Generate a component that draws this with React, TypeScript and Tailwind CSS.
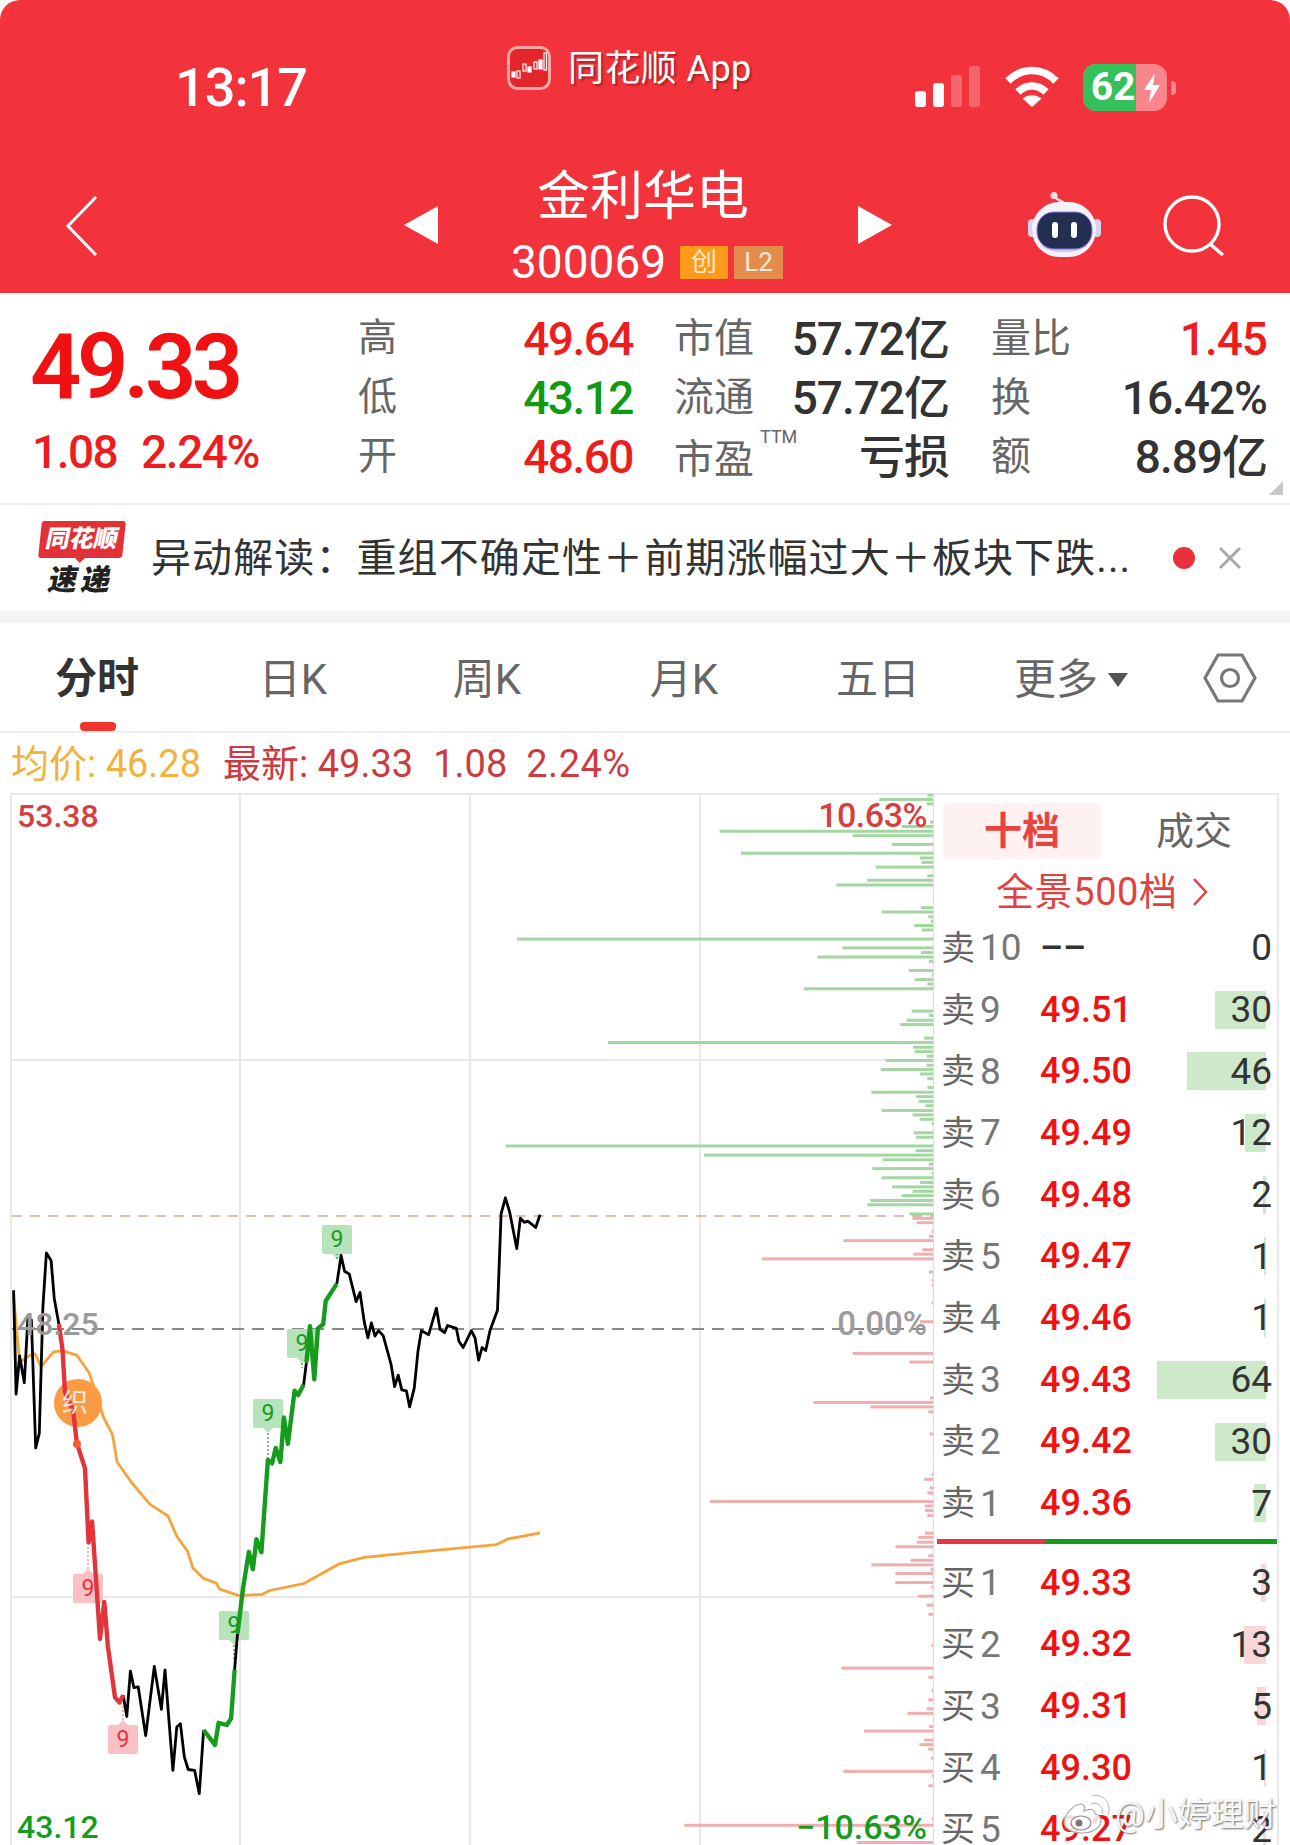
import { Fragment } from "react";

type Pt = [number, number];

// trace points were read off a crop, this maps them back to page pixels
const z4 = (pts: Pt[]) => pts.map(([x, y]) => `${(x / 2.8).toFixed(1)},${(1180 + y / 2.358).toFixed(1)}`).join(" ");

const black1: Pt[] = [[38,260],[45,505],[55,415],[68,478],[78,325],[88,330],[100,632],[110,597],[120,300],[130,172],[143,190],[152,280],[165,340]];
const red1: Pt[] = [[165,340],[175,400],[182,500],[205,545],[215,620],[238,680],[248,855],[258,805],[280,1082],[292,995],[302,1100],[322,1220],[335,1232],[345,1215]];
const black2: Pt[] = [[345,1215],[355,1265],[365,1158],[375,1197],[387,1195],[408,1310],[432,1147],[452,1248],[462,1155],[484,1392],[495,1290],[505,1282],[516,1360],[527,1390],[545,1392],[558,1447],[570,1297]];
const green1: Pt[] = [[570,1297],[602,1332],[612,1280],[635,1285],[647,1270],[657,1155]];
const black3: Pt[] = [[657,1155],[665,1070]];
const green2: Pt[] = [[665,1070],[680,965],[697,877],[708,918],[718,847],[732,878],[750,660],[762,668],[772,632],[785,665],[795,560],[806,622],[825,497],[835,507],[850,483]];
const black4: Pt[] = [[850,483],[858,430]];
const green3: Pt[] = [[858,430],[868,345],[880,470],[890,350],[905,340],[912,285],[943,245]];
const black5: Pt[] = [[943,245],[955,178],[965,215],[978,222],[997,287],[1008,265],[1020,335],[1030,372],[1040,337],[1050,368],[1060,355],[1073,367],[1095,435],[1105,487],[1115,460],[1125,495],[1138,497],[1147,535],[1160,490],[1170,405],[1180,355],[1200,365],[1222,302],[1232,352],[1245,360],[1253,343],[1278,350],[1285,380],[1297,395],[1320,355],[1330,372],[1340,425],[1350,395],[1360,402],[1372,355],[1393,307],[1403,80],[1415,42],[1427,75],[1447,162],[1457,90],[1468,100],[1478,97],[1500,112],[1512,82]];
const avg: Pt[] = [[38,275],[55,430],[80,415],[98,410],[115,440],[150,405],[175,403],[215,413],[250,455],[290,560],[315,600],[328,665],[370,715],[420,765],[470,792],[495,840],[525,875],[540,915],[570,940],[605,950],[615,965],[670,980],[735,977],[755,968],[850,952],[950,905],[1020,890],[1160,878],[1390,860],[1420,847],[1512,832]];

const greenBars: Pt[] = [[15,1342],[28,1198],[41,1340],[95,1350],[108,1265],[122,719],[135,1118],[161,1236],[187,783],[201,1320],[214,1325],[228,1187],[254,1342],[267,1162],[281,1069],[348,1323],[361,1205],[375,1345],[388,1352],[401,1303],[414,1325],[441,111],[467,1087],[481,1323],[494,1012],[507,1347],[534,1286],[547,1355],[561,1304],[574,1342],[588,972],[654,1295],[667,1347],[681,1280],[694,1261],[734,1332],[747,384],[761,1299],[774,1304],[787,1340],[800,1217],[814,1340],[827,1202],[840,1320],[854,1342],[880,1342],[894,1174],[907,1308],[921,1316],[934,1336],[948,1205],[961,1298],[974,1320],[987,1355],[1014,1302],[1027,1308],[1053,77],[1067,1307],[1080,672],[1094,1208],[1107,1347],[1120,1177],[1134,1355],[1147,1205],[1161,1320],[1174,1236],[1187,1298],[1200,1265],[1214,1171],[1227,1162],[1254,1288]];
const redBarsTop: Pt[] = [[1267,1297],[1280,1310],[1306,1355],[1320,1347],[1333,1090],[1360,1327],[1373,1300],[1387,845],[1426,1347]];
const redBarsLow: Pt[] = [[195,1355],[207,1355],[228,1358],[250,1355],[296,1320],[373,1118],[394,1288],[481,1350],[492,1000],[503,1171],[515,1345],[569,1349],[622,1358],[667,1355],[679,1332],[700,1349],[712,1342],[733,690],[744,1335],[755,1335],[767,1342],[810,1335],[820,1315],[832,1310],[843,1246],[865,1345],[876,1292],[887,1174],[898,1352],[908,1246],[930,1246],[941,1355],[963,1313],[985,1340],[1007,1345],[1083,1355],[1138,1084],[1160,1345],[1192,1355],[1215,1345],[1237,1340],[1248,1282],[1280,1348],[1291,1152],[1313,1333],[1324,1318],[1335,1345],[1357,1353],[1389,1090],[1400,1355],[1424,1345],[1505,1355],[1520,613],[1562,1130]];

const markers = [
  { x: 337, y: 1225, up: false, color: "green", stem: 0 },
  { x: 268, y: 1399, up: false, color: "green", stem: 32 },
  { x: 302, y: 1329, up: false, color: "green", stem: 10 },
  { x: 234, y: 1611, up: false, color: "green", stem: 20 },
  { x: 88, y: 1574, up: true, color: "red", stem: 28 },
  { x: 123, y: 1725, up: true, color: "red", stem: 20 },
];

const quoteRows = [
  ["高", "49.64", "text-[#ee1c1c]", "市值", "57.72亿", "量比", "1.45", "text-[#ee1c1c]"],
  ["低", "43.12", "text-[#0f9a12]", "流通", "57.72亿", "换", "16.42%", "text-[#333333]"],
  ["开", "48.60", "text-[#ee1c1c]", "市盈", "亏损", "额", "8.89亿", "text-[#333333]"],
];

const sellRows = [
  ["10", "––", "0", 0],
  ["9", "49.51", "30", 51],
  ["8", "49.50", "46", 79],
  ["7", "49.49", "12", 21],
  ["6", "49.48", "2", 3],
  ["5", "49.47", "1", 2],
  ["4", "49.46", "1", 2],
  ["3", "49.43", "64", 109],
  ["2", "49.42", "30", 51],
  ["1", "49.36", "7", 12],
] as const;

const buyRows = [
  ["1", "49.33", "3", 5],
  ["2", "49.32", "13", 22],
  ["3", "49.31", "5", 9],
  ["4", "49.30", "1", 2],
  ["5", "49.27", "2", 3],
] as const;

function AppLogo() {
  return (
    <svg width="44" height="44" viewBox="0 0 44 44">
      <rect x="1.5" y="1.5" width="41" height="41" rx="9" fill="#e3262c" stroke="#f9a6a8" strokeWidth="3" />
      <g fill="none" stroke="#ffffff" strokeWidth="1.2">
        <rect x="5" y="26" width="3" height="5" fill="#ffffff" />
        <rect x="10" y="25" width="3" height="7" />
        <rect x="16" y="18" width="3" height="7" />
        <rect x="21" y="21" width="3" height="5" fill="#ffffff" />
        <rect x="27" y="16" width="3" height="7" />
        <rect x="32" y="14" width="3" height="9" fill="#ffffff" />
        <rect x="37" y="7" width="2.5" height="17" />
      </g>
    </svg>
  );
}

function Signal() {
  return (
    <div className="flex items-end gap-[7px] h-[41px]">
      <div className="w-[11px] h-[16px] rounded-[3px] bg-white" />
      <div className="w-[11px] h-[24px] rounded-[3px] bg-white" />
      <div className="w-[11px] h-[32px] rounded-[3px] bg-white/25" />
      <div className="w-[11px] h-[41px] rounded-[3px] bg-white/25" />
    </div>
  );
}

function Wifi() {
  return (
    <svg width="56" height="42" viewBox="0 0 56 42" fill="none" stroke="#ffffff" strokeWidth="7.5">
      <path d="M4 16 C18 2 38 2 52 16" />
      <path d="M14 27 C22 19 34 19 42 27" />
      <path d="M18.5 33.5 L28 42 L37.5 33.5 C32 29 24 29 18.5 33.5 Z" fill="#ffffff" stroke="none" />
    </svg>
  );
}

function Battery() {
  return (
    <div className="flex items-center gap-[4px]">
      <div className="relative w-[84px] h-[47px] rounded-[13px] overflow-hidden bg-[#f8868c]">
        <div className="absolute left-0 top-0 bottom-0 w-[53px] bg-[#35c05a]" />
        <div className="relative flex items-center h-full pl-[8px] text-[39px] leading-none font-bold text-white">
          62
          <svg width="18" height="30" viewBox="0 0 18 30" className="ml-[8px]">
            <path d="M12 0 L1 17 H8 L6 30 L17 12 H10 Z" fill="#ffffff" />
          </svg>
        </div>
      </div>
      <div className="w-[5px] h-[14px] rounded-r-[4px] bg-[#f8868c]" />
    </div>
  );
}

function Robot() {
  return (
    <svg width="74" height="66" viewBox="0 0 74 66">
      <circle cx="27" cy="3.5" r="3.5" fill="#f6dfe4" />
      <path d="M28 5 C31 9 35 9 37 11" fill="none" stroke="#f6dfe4" strokeWidth="2.5" />
      <rect x="1" y="27" width="8" height="18" rx="4" fill="#d9d2f2" />
      <rect x="66" y="27" width="8" height="18" rx="4" fill="#d9d2f2" />
      <rect x="5" y="10" width="64" height="55" rx="27" fill="#f5f2fb" />
      <path d="M12 52 C22 63 52 63 62 52 C52 58 22 58 12 52 Z" fill="#cfc7f0" />
      <rect x="10" y="20" width="55" height="37" rx="17" fill="#222f52" stroke="#8f7be0" strokeWidth="1" />
      <rect x="25" y="30" width="6" height="16" rx="3" fill="#ffffff" />
      <rect x="44" y="30" width="6" height="16" rx="3" fill="#ffffff" />
    </svg>
  );
}

function WeiboMark() {
  return (
    <svg width="48" height="40" viewBox="0 0 48 40" fill="none">
      <path d="M19 39 C8 39 1 34 1 28 C1 21 11 10 18 10 C22 10 22 14 21 17 C27 14 32 15 32 20 C37 21 38 24 38 27 C38 33 30 39 19 39 Z" fill="#ffffff" fillOpacity="0.85" stroke="#a8a8a8" strokeWidth="1.2" />
      <ellipse cx="18" cy="29" rx="10" ry="7" fill="#ffffff" fillOpacity="0.7" stroke="#8a8a8a" strokeWidth="1.2" />
      <circle cx="16" cy="29" r="3.5" fill="#777777" />
      <path d="M28 10 C33 7 41 12 39 20" stroke="#ffffff" strokeWidth="3" />
      <path d="M28 10 C33 7 41 12 39 20" stroke="#b0b0b0" strokeWidth="1" />
      <path d="M29 2 C40 -1 49 9 45 21" stroke="#ffffff" strokeWidth="3" />
      <path d="M29 2 C40 -1 49 9 45 21" stroke="#b8b8b8" strokeWidth="1" />
    </svg>
  );
}

function Chart() {
  const bars = (list: Pt[], top: number, k: number, fill: string) =>
    list.map(([zy, zx], i) => (
      <rect key={i} x={480 + zx / 3} y={top + zy / k - 1.5} width={934 - (480 + zx / 3)} height="3" fill={fill} />
    ));

  return (
    <svg width="934" height="1052" viewBox="0 793 934 1052" className="block">
      <g stroke="#e9e9e9" strokeWidth="2">
        <line x1="11" y1="794" x2="934" y2="794" />
        <line x1="11" y1="793" x2="11" y2="1845" />
        <line x1="240" y1="793" x2="240" y2="1845" />
        <line x1="470" y1="793" x2="470" y2="1845" />
        <line x1="700" y1="793" x2="700" y2="1845" />
        <line x1="11" y1="1060" x2="934" y2="1060" />
        <line x1="11" y1="1597" x2="934" y2="1597" />
      </g>

      {bars(greenBars, 790, 2.958, "#a3d6a1")}
      {bars(redBarsTop, 790, 2.958, "#f0aeae")}
      {bars(redBarsLow, 1200, 2.431, "#f0aeae")}
      <line x1="934" y1="793" x2="934" y2="1845" stroke="#dddddd" strokeWidth="2" />

      <line x1="12" y1="1216" x2="934" y2="1216" stroke="#c9b391" strokeWidth="1.5" strokeDasharray="10 8" />
      <line x1="12" y1="1329" x2="930" y2="1329" stroke="#8a8a8a" strokeWidth="2" strokeDasharray="12 8" />

      {markers.map((m, i) => {
        const green = m.color === "green";
        const stroke = green ? "#4aa85a" : "#ef9aa0";
        return (
          <Fragment key={i}>
            <rect x={m.x - 15} y={m.y} width="30" height="29" rx="2" fill={green ? "#b7e3bb" : "#f9c1c6"} />
            {m.up ? (
              <>
                <polygon points={`${m.x - 5},${m.y} ${m.x},${m.y - 5} ${m.x + 5},${m.y}`} fill="#f9c1c6" />
                <line x1={m.x} y1={m.y - 5} x2={m.x} y2={m.y - m.stem} stroke={stroke} strokeWidth="1.5" strokeDasharray="2 2" />
              </>
            ) : (
              <>
                <polygon points={`${m.x - 5},${m.y + 29} ${m.x},${m.y + 34} ${m.x + 5},${m.y + 29}`} fill="#b7e3bb" />
                <line x1={m.x} y1={m.y + 34} x2={m.x} y2={m.y + 29 + m.stem} stroke={stroke} strokeWidth="1.5" strokeDasharray="2 2" />
              </>
            )}
            <text x={m.x} y={m.y + 22} textAnchor="middle" fontSize="23" fill={green ? "#169c1c" : "#e5343c"} fontFamily="Roboto, sans-serif">
              9
            </text>
          </Fragment>
        );
      })}

      <polyline points={z4(avg)} fill="none" stroke="#f5a33c" strokeWidth="2.8" strokeLinejoin="round" />
      <circle cx="78" cy="1403" r="24" fill="#f99a45" />
      <polyline points={z4(black1)} fill="none" stroke="#000000" strokeWidth="2.8" strokeLinejoin="round" />
      <polyline points={z4(black2)} fill="none" stroke="#000000" strokeWidth="2.8" strokeLinejoin="round" />
      <polyline points={z4(black3)} fill="none" stroke="#000000" strokeWidth="2.8" />
      <polyline points={z4(black4)} fill="none" stroke="#000000" strokeWidth="2.8" />
      <polyline points={z4(black5)} fill="none" stroke="#000000" strokeWidth="2.8" strokeLinejoin="round" />
      <polyline points={z4(red1)} fill="none" stroke="#e3343b" strokeWidth="4.4" strokeLinejoin="round" />
      <polyline points={z4(green1)} fill="none" stroke="#169c1c" strokeWidth="4.4" strokeLinejoin="round" />
      <polyline points={z4(green2)} fill="none" stroke="#169c1c" strokeWidth="4.4" strokeLinejoin="round" />
      <polyline points={z4(green3)} fill="none" stroke="#169c1c" strokeWidth="4.4" strokeLinejoin="round" />
      <circle cx="77" cy="1444" r="4" fill="#f2602f" />
    </svg>
  );
}

function OrderRow({ side, row, barClass }: { side: string; row: readonly [string, string, string, number]; barClass: string }) {
  const [level, price, qty, bar] = row;
  return (
    <div className="relative flex items-center h-[61.7px] pl-[7px] pr-[5px]">
      {bar > 0 && <div className={`absolute right-[11px] top-[12px] h-[38px] ${barClass}`} style={{ width: bar }} />}
      <span className="relative w-[39px] text-[34px] text-[#666666] leading-none">{side}</span>
      <span className="relative w-[60px] text-[37px] text-[#777777] leading-none">{level}</span>
      <span className={`relative text-[36px] font-medium leading-none ${level === "10" ? "text-[#333333]" : "text-[#f01212]"}`}>{price}</span>
      <span className="relative ml-auto text-[37px] text-[#333333] leading-none">{qty}</span>
    </div>
  );
}

export default function App() {
  return (
    <div className="relative w-[1290px] h-[1845px] overflow-hidden bg-white font-[Roboto,'Noto_Sans_CJK_SC',sans-serif]">
      {/* Header */}
      <header className="h-[293px] bg-[#f2333b] rounded-t-[20px] text-white">
        <div className="flex items-start h-[135px]">
          <div className="ml-[175px] mt-[60px] w-[132px] text-[54px] leading-[56px] font-medium tracking-[-1px]">13:17</div>
          <div className="ml-[200px] mt-[46px]">
            <AppLogo />
          </div>
          <div className="ml-[17px] mt-[46px] text-[36px] leading-[46px] tracking-[0.4px] [text-shadow:2px_2px_2px_rgba(110,20,20,0.55)]">同花顺 App</div>
          <div className="ml-[163px] mt-[66px]">
            <Signal />
          </div>
          <div className="ml-[24px] mt-[65px]">
            <Wifi />
          </div>
          <div className="ml-[23px] mt-[64px]">
            <Battery />
          </div>
        </div>

        <div className="flex items-start">
          <svg width="36" height="62" viewBox="0 0 36 62" className="ml-[65px] mt-[60px]" fill="none" stroke="#ffffff" strokeWidth="3">
            <path d="M31 2 L3 31 L31 60" />
          </svg>
          <svg width="34" height="38" viewBox="0 0 34 38" className="ml-[303px] mt-[71px]">
            <polygon points="0,19 34,0 34,38" fill="#ffffff" />
          </svg>
          <div className="ml-[74px] w-[346px] flex flex-col">
            <div className="text-[53px] leading-[60px] mt-[32px] ml-[25px]">金利华电</div>
            <div className="flex items-center mt-[15px] -ml-[1px]">
              <span className="text-[46px] leading-[40px] w-[169px]">300069</span>
              <span className="w-[48px] h-[33px] bg-[#fb9a1b] text-[#fde9c8] text-[26px] leading-[33px] text-center">创</span>
              <span className="ml-[6px] w-[49px] h-[33px] bg-[#e28d4c] text-[#fde9d8] text-[26px] leading-[33px] text-center">L2</span>
            </div>
          </div>
          <svg width="34" height="38" viewBox="0 0 34 38" className="mt-[71px]">
            <polygon points="34,19 0,0 0,38" fill="#ffffff" />
          </svg>
          <div className="ml-[135px] mt-[57px]">
            <Robot />
          </div>
          <svg width="62" height="62" viewBox="0 0 62 62" className="ml-[62px] mt-[60px]" fill="none" stroke="#ffffff" strokeWidth="3.4">
            <circle cx="29" cy="29" r="27" />
            <path d="M47 49 L60 60" />
          </svg>
        </div>
      </header>

      {/* Quote */}
      <section className="relative flex h-[210px]">
        <div className="w-[360px] pl-[30px] pt-[29px]">
          <div className="text-[90px] leading-[92px] font-semibold tracking-[-4.5px] text-[#f01212]">49.33</div>
          <div className="flex gap-[24px] mt-[13px] pl-[2px] text-[46px] leading-[50px] font-medium tracking-[-1.5px] text-[#ee1c1c]">
            <span>1.08</span>
            <span>2.24%</span>
          </div>
        </div>
        <div className="pt-[16px]">
          {quoteRows.map(([l1, v1, c1, l2, v2, l3, v3, c3]) => (
            <div key={l1} className="grid grid-cols-[273px_273px_275px] gap-x-[43px] h-[59px] items-center">
              <div className="flex justify-between items-center">
                <span className="-ml-[2px] text-[39px] leading-none text-[#666666]">{l1}</span>
                <span className={`text-[46px] leading-none tracking-[-1.5px] font-medium ${c1}`}>{v1}</span>
              </div>
              <div className="flex justify-between items-center">
                <span className={`relative -ml-[2px] text-[40px] leading-none text-[#666666] ${l2 === "市盈" ? "translate-y-[3px]" : ""}`}>
                  {l2}
                  {l2 === "市盈" && (
                    <span className="absolute left-[86px] -top-[12px] text-[18px] leading-none">TTM</span>
                  )}
                </span>
                <span className="text-[46px] leading-none tracking-[-1px] font-medium text-[#333333]">{v2}</span>
              </div>
              <div className="flex justify-between items-center">
                <span className="-ml-[1px] text-[40px] leading-none text-[#666666]">{l3}</span>
                <span className={`text-[46px] leading-none tracking-[-1px] font-medium ${c3}`}>{v3}</span>
              </div>
            </div>
          ))}
        </div>
        <div className="absolute right-[7px] bottom-[8px] w-0 h-0 border-l-[14px] border-l-transparent border-b-[14px] border-b-[#c9c9c9]" />
      </section>

      {/* Banner */}
      <div className="flex items-center h-[108px] border-t-2 border-[#eeeeee]">
        <div className="ml-[37px] w-[90px] flex flex-col items-center">
          <div className="relative w-[84px] h-[37px] rounded-[3px] bg-[#e3313a] -skew-x-6 text-center text-[24px] leading-[37px] font-black text-white">
            <span className="inline-block -skew-x-6">同花顺</span>
            <div className="absolute left-[36px] -bottom-[5px] w-0 h-0 border-x-[6px] border-x-transparent border-t-[6px] border-t-[#e3313a]" />
          </div>
          <div className="mt-[7px] -skew-x-12 text-[29px] leading-[30px] tracking-[4px] font-black text-[#222222]">速递</div>
        </div>
        <div className="ml-[24px] mt-[2px] w-[1000px] text-[40px] leading-[50px] tracking-[1.1px] text-[#333333] whitespace-nowrap">
          异动解读：重组不确定性＋前期涨幅过大＋板块下跌...
        </div>
        <div className="absolute left-[1173px] w-[22px] h-[22px] rounded-full bg-[#e8313a]" />
        <svg width="24" height="24" viewBox="0 0 24 24" className="absolute left-[1218px]" stroke="#a8a8a8" strokeWidth="3">
          <path d="M2 2 L22 22 M22 2 L2 22" />
        </svg>
      </div>
      <div className="h-[12px] bg-[#f4f4f4]" />

      {/* Period tabs */}
      <nav className="relative grid grid-cols-[194px_198px_190px_204px_184px_194px_120px] items-center h-[110px] pt-[6px] border-b-2 border-[#eeeeee] text-[42px] leading-none text-[#666666]">
        <div className="relative text-center font-bold text-[#333333] -mt-[2px]">分时</div>
        <div className="text-center">日K</div>
        <div className="text-center">周K</div>
        <div className="text-center">月K</div>
        <div className="text-center">五日</div>
        <div className="flex justify-center items-center gap-[10px] pl-[8px]">
          更多
          <svg width="20" height="14" viewBox="0 0 20 14">
            <polygon points="0,0 20,0 10,14" fill="#555555" />
          </svg>
        </div>
        <svg width="54" height="50" viewBox="0 0 54 50" className="ml-[39px] -mt-[4px]" fill="none" stroke="#777777" strokeWidth="3.2">
          <polygon points="2,25 15,2 39,2 52,25 39,48 15,48" />
          <circle cx="27" cy="25" r="8.5" />
        </svg>
        <div className="absolute left-[80px] bottom-0 w-[36px] h-[9px] rounded-[4px] bg-[#f0352f]" />
      </nav>

      {/* Legend */}
      <div className="flex items-center h-[60px] pt-[2px] pl-[11px] text-[38px] leading-none">
        <span className="text-[#f0b33f]">均价: 46.28</span>
        <span className="ml-[22px] text-[#cb3b40]">最新: 49.33</span>
        <span className="ml-[20px] text-[#cb3b40]">1.08</span>
        <span className="ml-[19px] tracking-[0.5px] text-[#cb3b40]">2.24%</span>
      </div>

      {/* Chart and order book */}
      <div className="flex">
        <div className="relative w-[934px] h-[1052px] shrink-0">
          <Chart />
          <span className="absolute left-[17px] top-[5px] text-[32px] leading-[36px] font-medium text-[#d63e42]">53.38</span>
          <span className="absolute right-[7px] top-[4px] text-[34px] leading-[36px] tracking-[-0.5px] font-medium text-[#d63e42]">10.63%</span>
          <span className="absolute left-[17px] top-[513px] text-[32px] leading-[36px] font-medium text-[#9a9a9a]">48.25</span>
          <span className="absolute right-[7px] top-[513px] text-[33px] leading-[36px] font-medium text-[#9a9a9a]">0.00%</span>
          <span className="absolute left-[17px] top-[1016px] text-[32px] leading-[36px] font-medium text-[#169c1c]">43.12</span>
          <span className="absolute right-[7px] top-[1016px] text-[34px] leading-[36px] font-medium text-[#169c1c]">−10.63%</span>
          <span className="absolute left-[62px] top-[596px] text-[26px] leading-[28px] text-white/80">织</span>
        </div>

        <div className="w-[345px] h-[1052px] border-t-2 border-r-2 border-[#e9e9e9]">
          <div className="flex items-center mt-[8px] h-[56px]">
            <div className="ml-[9px] w-[158px] h-[56px] rounded-[6px] bg-[#fef1f1] text-center text-[38px] leading-[56px] font-bold text-[#e8433f]">十档</div>
            <div className="ml-[55px] text-[38px] leading-none text-[#666666]">成交</div>
          </div>
          <div className="flex items-center h-[58px] pt-[8px] pl-[62px] text-[38px] leading-none tracking-[0.6px] text-[#e0423f]">
            全景500档
            <svg width="16" height="30" viewBox="0 0 16 30" className="ml-[14px]" fill="none" stroke="#e0423f" strokeWidth="2.5">
              <path d="M2 2 L14 15 L2 28" />
            </svg>
          </div>
          {sellRows.map((r) => (
            <OrderRow key={r[0]} side="卖" row={r} barClass="bg-[#cde9ca]" />
          ))}
          <div className="flex h-[5px] mt-[5px] ml-[3px]">
            <div className="w-[108px] bg-[#e0393f]" />
            <div className="flex-1 bg-[#169c1c]" />
          </div>
          <div className="mt-[8px]">
            {buyRows.map((r) => (
              <OrderRow key={r[0]} side="买" row={r} barClass="bg-[#f9d6d8]" />
            ))}
          </div>
        </div>
      </div>

      {/* Watermark */}
      <div className="absolute left-[1063px] top-[1794px] flex items-center gap-[4px] text-[33px] leading-none text-[#f6f6f6] [text-shadow:1px_1px_2px_rgba(60,60,60,0.75)]">
        <WeiboMark />
        <span className="whitespace-nowrap">@小婷理财</span>
      </div>
    </div>
  );
}
